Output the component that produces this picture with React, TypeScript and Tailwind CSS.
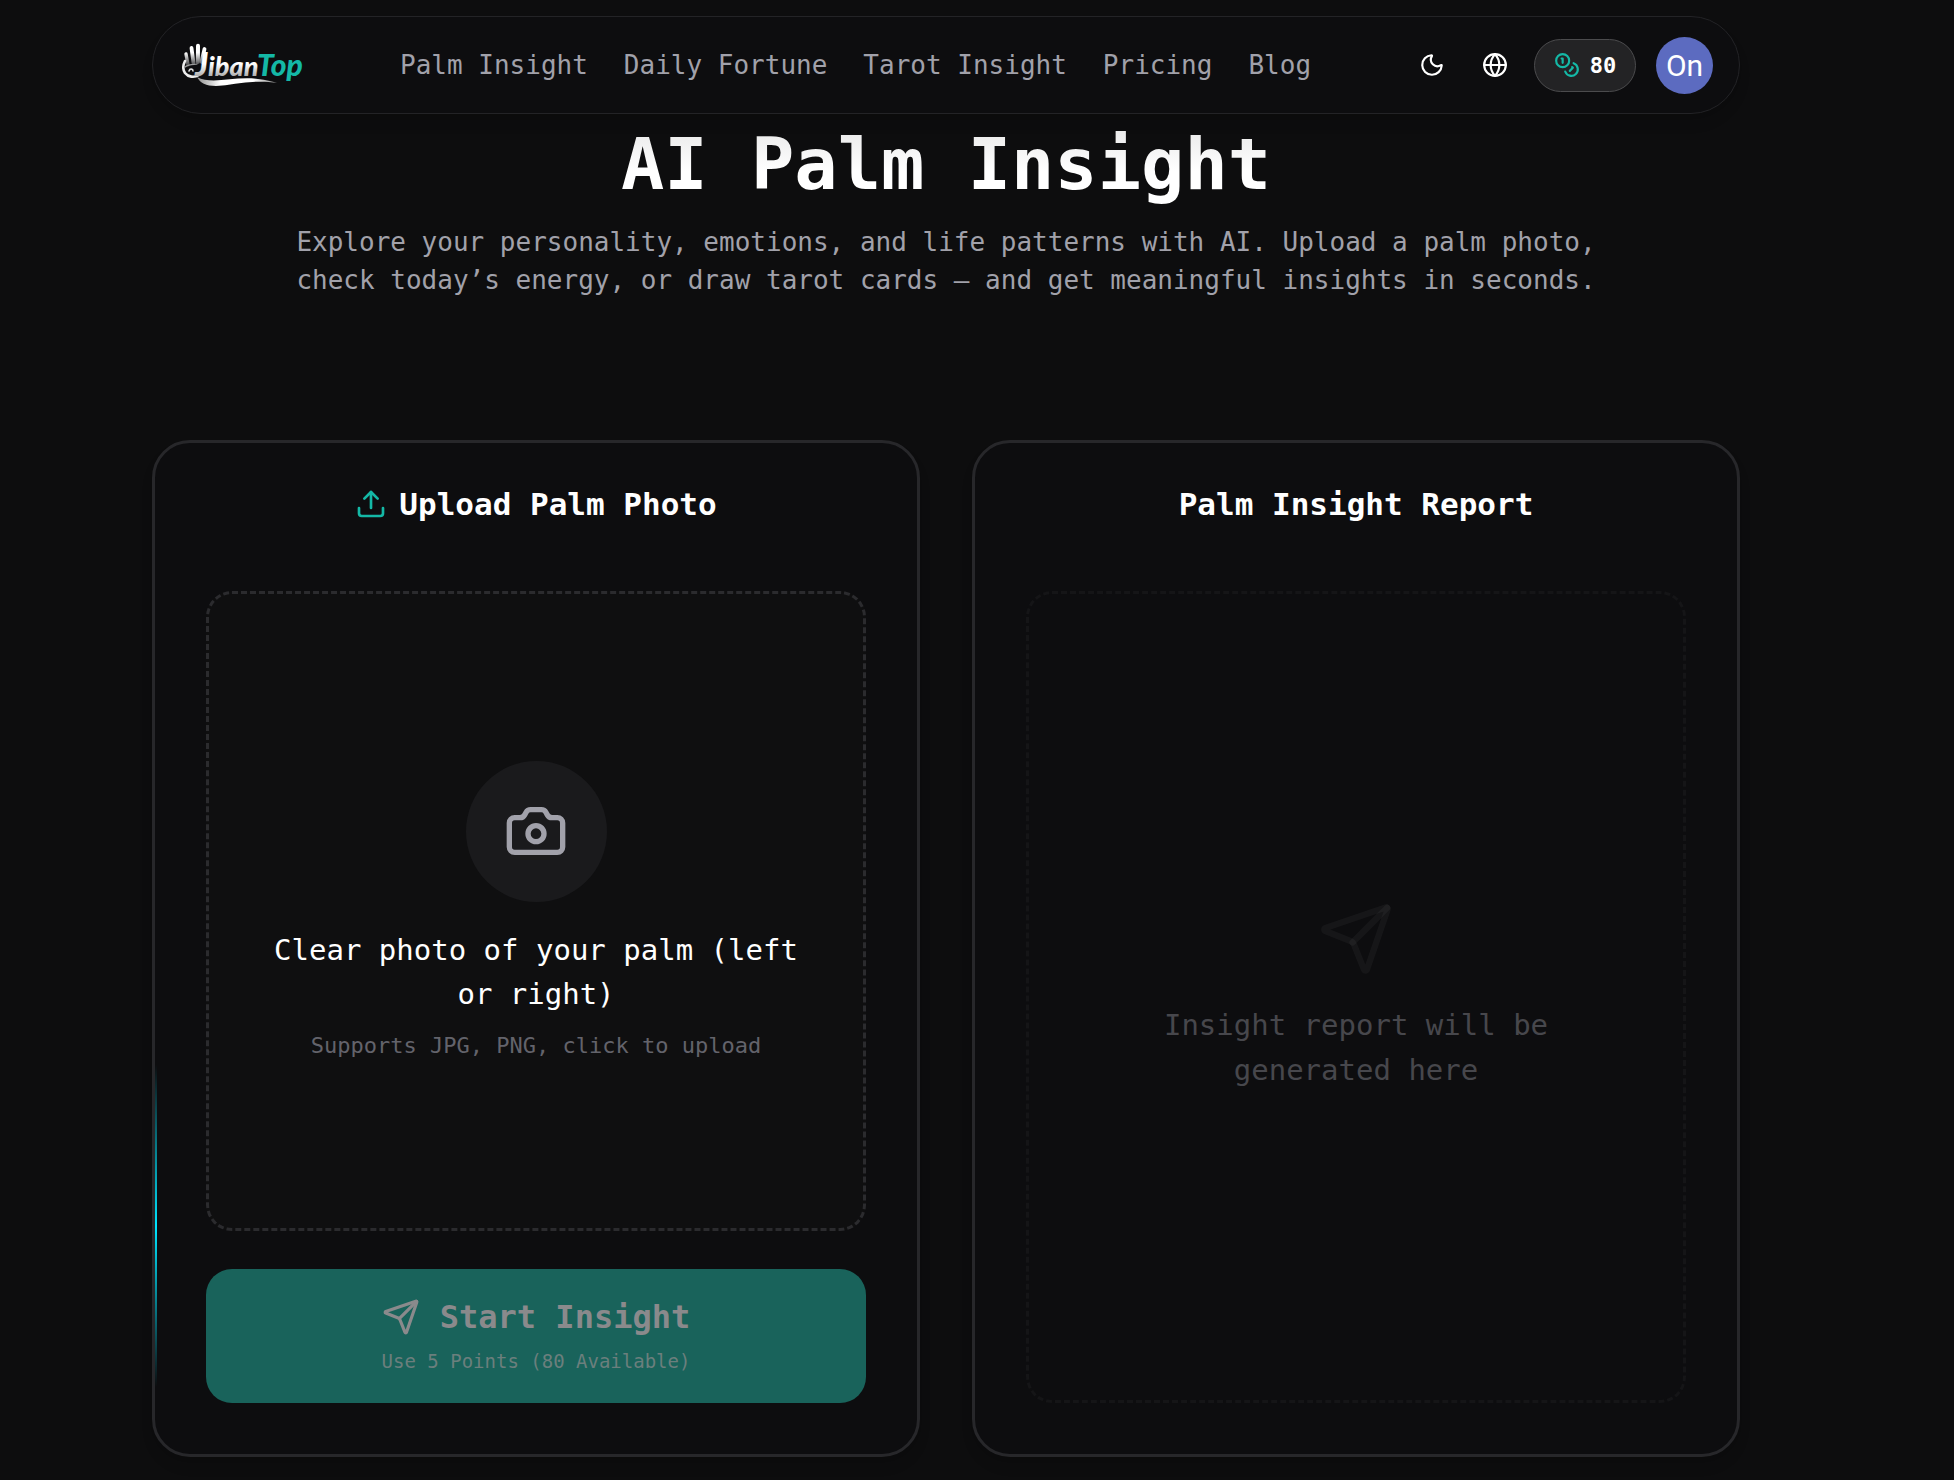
import React, { useState } from 'react';
import { Camera, Coins, Globe, Moon, Send, Upload } from 'lucide-react';

const navLinks = ['Palm Insight', 'Daily Fortune', 'Tarot Insight', 'Pricing', 'Blog'];

const Logo: React.FC = () => (
  <svg viewBox="0 0 124 44" className="h-[44px] w-[124px]" role="img" aria-label="JibanTop">
    <defs>
      <linearGradient id="word" gradientUnits="userSpaceOnUse" x1="0" y1="8" x2="0" y2="34">
        <stop offset="0.5" stopColor="#ffffff" />
        <stop offset="1" stopColor="#a8a8a8" />
      </linearGradient>
      <linearGradient id="hand" gradientUnits="userSpaceOnUse" x1="0" y1="2" x2="0" y2="24">
        <stop offset="0.35" stopColor="#ffffff" />
        <stop offset="1" stopColor="#2a2a2c" />
      </linearGradient>
      <linearGradient id="swoosh" gradientUnits="userSpaceOnUse" x1="14" y1="0" x2="96" y2="0">
        <stop offset="0" stopColor="#8a8a8a" />
        <stop offset="0.3" stopColor="#ffffff" />
        <stop offset="0.7" stopColor="#ffffff" />
        <stop offset="1" stopColor="#777777" />
      </linearGradient>
    </defs>
    {/* hand */}
    <g stroke="url(#hand)" strokeLinecap="round" fill="none">
      <path d="M4 11 L6 22" strokeWidth="3.4" />
      <path d="M9.500 5 L11.500 20" strokeWidth="3.8" />
      <path d="M16 2.800 L15.900 19" strokeWidth="4" />
      <path d="M22.500 6 L19.500 19" strokeWidth="3.8" />
    </g>
    {/* wrist */}
    <g fill="none" strokeLinecap="round">
      <path d="M3 18 C1 22 1 27 3 30 C6 34 12 35 17 32" stroke="#ededed" strokeWidth="2.600" />
      <path d="M3 24 C8 20 13 22 15 21" stroke="#9a9a9a" strokeWidth="1.200" />
      <path d="M7 28 C8 25 11 26 11 28" stroke="#dddddd" strokeWidth="1.600" />
    </g>
    <text x="13" y="33" fill="url(#word)" fontFamily="Lato" fontStyle="italic" fontWeight="900" fontSize="32">J</text>
    <text x="26" y="33" fill="url(#word)" fontFamily="Lato" fontStyle="italic" fontWeight="900" fontSize="27">iban</text>
    <text x="75" y="33" fill="#14b8a6" fontFamily="Lato" fontStyle="italic" fontWeight="900" fontSize="30">Top</text>
    <path d="M15 34 C30 42 52 33 76 36 C84 37 90 38 95 40 C72 36 52 42 34 43 C24 43 18 40 15 34Z" fill="url(#swoosh)" />
  </svg>
);

const Header: React.FC = () => (
  <header className="flex h-[98px] items-center rounded-full border border-[#232326] bg-[#0d0d0f] pr-[26px] pl-[29px] shadow-lg">
    <a href="#home">
      <Logo />
    </a>
    <nav className="ml-[94px] flex gap-[36px] text-[26px] leading-[38px] text-[#a1a1aa]">
      {navLinks.map((label) => (
        <a key={label} href="#nav" className="whitespace-nowrap">
          {label}
        </a>
      ))}
    </nav>
    <div className="ml-auto flex items-center">
      <button type="button" aria-label="Toggle theme" className="flex size-[63px] items-center justify-center text-white">
        <Moon size={26} />
      </button>
      <button type="button" aria-label="Language" className="flex size-[63px] items-center justify-center text-white">
        <Globe size={26} />
      </button>
      <button
        type="button"
        className="ml-2 flex h-[53px] w-[102px] items-center justify-center gap-[10px] rounded-full border border-[#4b4b4d] bg-[#232325] text-[22px] font-bold text-white"
      >
        <Coins size={26} className="text-[#14b8a6]" />
        80
      </button>
      <button
        type="button"
        className="ml-[20px] flex size-[57px] items-center justify-center rounded-full bg-[#5c6bc0] font-['Roboto',sans-serif] text-[30px] text-white"
      >
        On
      </button>
    </div>
  </header>
);

const UploadCard: React.FC = () => {
  const [fileName, setFileName] = useState('');

  return (
    <section className="relative flex flex-col rounded-[38px] border-3 border-[#27272a] bg-[#0d0d0f] p-[51px] pt-[37px] shadow-lg">
      {/* glow running along the border */}
      <div className="absolute top-[622px] left-0 h-[322px] w-[2px] bg-linear-to-b from-transparent via-[#00e5ff] to-transparent" />
      <h2 className="flex items-center justify-center gap-[12px] text-[31px] leading-[48px] font-bold text-white">
        <Upload size={32} className="text-[#14b8a6]" />
        Upload Palm Photo
      </h2>
      <label className="mt-[63px] flex h-[640px] cursor-pointer flex-col items-center justify-center rounded-[26px] border-3 border-dashed border-[#2b2b2e] bg-[#0f0f10] px-[51px] text-center">
        <span className="flex size-[141px] items-center justify-center rounded-full bg-[#1a1a1c] text-[#a1a1aa]">
          <Camera size={64} />
        </span>
        <span className="mt-[26px] text-[29px] leading-[44px] text-white">
          {fileName || 'Clear photo of your palm (left or right)'}
        </span>
        <span className="mt-[14px] text-[22px] leading-[32px] text-[#63636b]">Supports JPG, PNG, click to upload</span>
        <input
          type="file"
          accept="image/png,image/jpeg"
          className="sr-only"
          onChange={(e) => setFileName(e.target.files?.[0]?.name ?? '')}
        />
      </label>
      <button
        type="button"
        disabled={!fileName}
        className="mt-[38px] flex h-[134px] flex-col items-center justify-center rounded-[26px] bg-[#19635b] pb-1"
      >
        <span className="flex items-center gap-[20px] text-[32px] leading-[45px] font-bold text-[#8a8a8c]">
          <Send size={38} />
          Start Insight
        </span>
        <span className="mt-[8px] text-[19px] leading-[26px] text-[#6b7f7d]">Use 5 Points (80 Available)</span>
      </button>
    </section>
  );
};

const ReportCard: React.FC = () => (
  <section className="flex flex-col rounded-[38px] border-3 border-[#27272a] bg-[#0d0d0f] p-[51px] pt-[37px] shadow-lg">
    <h2 className="text-center text-[31px] leading-[48px] font-bold text-white">Palm Insight Report</h2>
    <div className="mt-[63px] flex flex-1 flex-col items-center justify-center rounded-[26px] border-3 border-dashed border-[#151517] px-[102px] text-center">
      <Send size={76} className="text-white/4" />
      <p className="mt-[26px] text-[29px] leading-[45px] text-[#47474c]">Insight report will be generated here</p>
    </div>
  </section>
);

const App: React.FC = () => (
  <div className="min-h-screen bg-[#0d0d0e] pr-[62px] pb-[22px] font-['DejaVu_Sans_Mono',monospace]">
    <div className="mx-auto max-w-[1588px] pt-[16px]">
      <Header />
      <main>
        <div className="text-center">
          <h1 className="mt-[10px] bg-linear-to-b from-[#e8e8e8] to-white to-60% bg-clip-text text-[72px] leading-[80px] font-bold text-transparent">
            AI Palm Insight
          </h1>
          <p className="mx-auto mt-[19px] max-w-[1320px] text-[26px] leading-[38px] text-[#a1a1aa]">
            Explore your personality, emotions, and life patterns with AI. Upload a palm photo, check today’s energy, or
            draw tarot cards — and get meaningful insights in seconds.
          </p>
        </div>
        <div className="mt-[141px] grid grid-cols-2 gap-[52px]">
          <UploadCard />
          <ReportCard />
        </div>
      </main>
    </div>
  </div>
);

export default App;
